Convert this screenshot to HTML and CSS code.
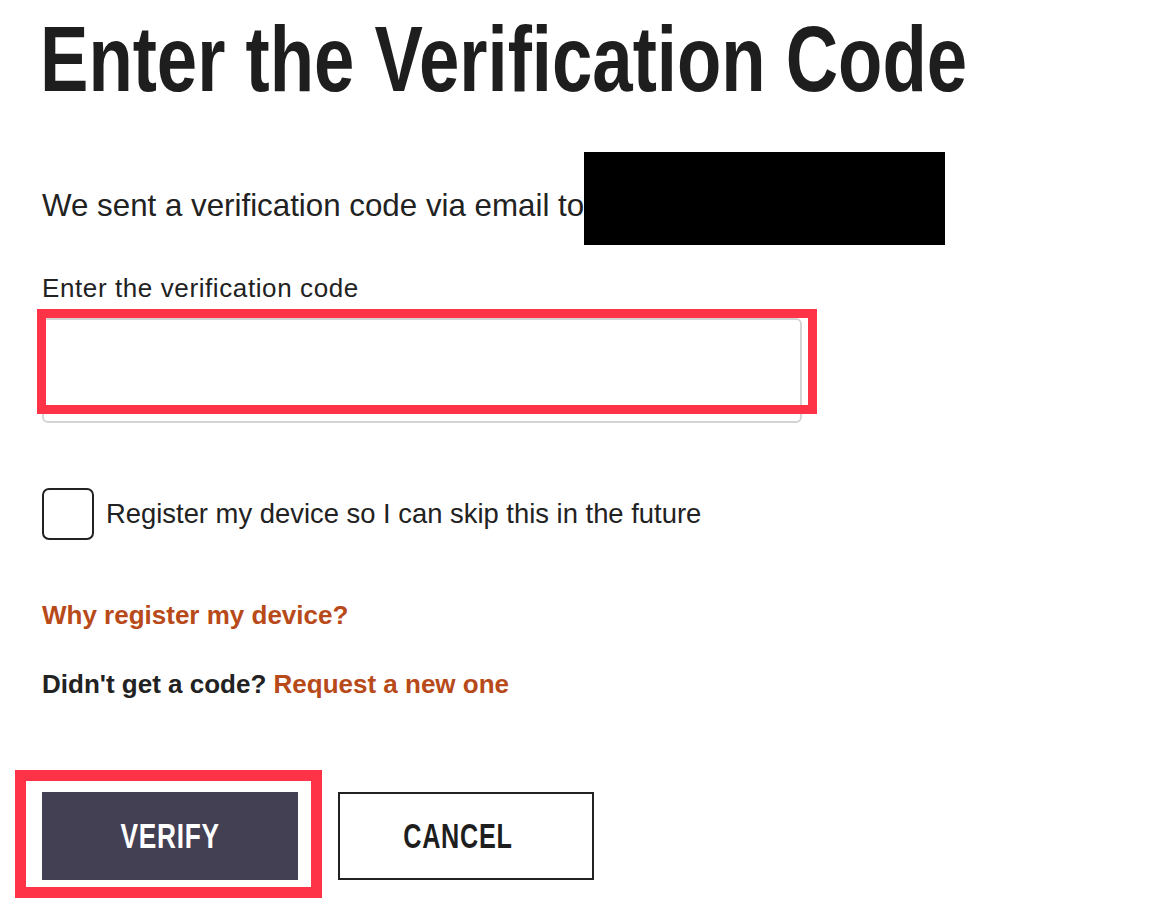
FILE: index.html
```html
<!DOCTYPE html>
<html lang="en">
<head>
    <meta charset="UTF-8">
    <meta name="viewport" content="width=device-width, initial-scale=1.0">
    <title>Enter the Verification Code</title>
    <link rel="stylesheet" href="styles.css">
</head>
<body>

<div class="container">
    <h1><span class="narrow">Enter the Verification Code</span></h1>
    <p class="sent">We sent a verification code via email to<span class="redacted"></span></p>

    <form id="verifyForm">
        <label for="code" class="label">Enter the verification code</label>
        <div class="field">
            <input type="text" id="code" name="code">
            <div class="highlight"></div>
        </div>

        <label class="remember">
            <input type="checkbox" name="remember">
            <span class="box"></span>
            <span>Register my device so I can skip this in the future</span>
        </label>

        <p class="why"><a href="#">Why register my device?</a></p>
        <p class="resend">Didn't get a code? <a href="#">Request a new one</a></p>

        <div class="actions">
            <div class="verify-wrap">
                <button type="submit" class="btn btn-verify"><span class="narrow">VERIFY</span></button>
                <div class="highlight highlight-btn"></div>
            </div>
            <button type="button" class="btn btn-cancel"><span class="narrow">CANCEL</span></button>
        </div>
    </form>
</div>

</body>
</html>
```

FILE: styles.css
```css
body {
    margin: 0;
    font-family: "Liberation Sans", Arial, sans-serif;
    color: #222;
    background-color: #fff;
}

.container {
    padding: 0 0 28px 42px;
}

.narrow {
    display: inline-block;
    white-space: nowrap;
}

h1 {
    margin: 13px 0 0 -2px;
    font-weight: bold;
    font-size: 93px;
    line-height: 1;
    color: #1e1e1e;
}

h1 .narrow {
    transform: scaleX(0.78);
    transform-origin: left center;
}

.sent {
    margin: 46px 0 0;
    font-size: 31.3px;
    line-height: 36px;
}

.redacted {
    display: inline-block;
    width: 361px;
    height: 93px;
    background-color: #000;
    vertical-align: -29px;
}

.label {
    display: block;
    margin-top: 28px;
    font-size: 26px;
    line-height: 30px;
    letter-spacing: 0.6px;
}

.field {
    position: relative;
    margin-top: 15px;
    width: 760px;
}

.field input {
    display: block;
    box-sizing: border-box;
    width: 760px;
    height: 105px;
    border: 2px solid #d4d4d4;
    border-radius: 6px;
    font-size: 28px;
    padding: 0 16px;
    outline: none;
}

.highlight {
    position: absolute;
    left: -5px;
    top: -9px;
    width: 780px;
    height: 105px;
    box-sizing: border-box;
    border: 9px solid #ff3347;
    pointer-events: none;
}

.remember {
    display: flex;
    align-items: center;
    gap: 12px;
    margin-top: 65px;
    font-size: 27.4px;
    line-height: 32px;
    cursor: pointer;
}

.remember input {
    display: none;
}

.box {
    width: 52px;
    height: 52px;
    box-sizing: border-box;
    border: 2px solid #222;
    border-radius: 7px;
    flex-shrink: 0;
}

.why {
    margin: 60px 0 0;
    font-size: 26px;
    line-height: 30px;
    font-weight: bold;
}

.resend {
    margin: 39px 0 0;
    font-size: 26px;
    line-height: 30px;
    font-weight: bold;
}

a {
    color: #b84a1a;
    text-decoration: none;
}

.actions {
    display: flex;
    gap: 40px;
    margin-top: 93px;
}

.verify-wrap {
    position: relative;
}

.btn {
    width: 256px;
    height: 88px;
    padding: 0;
    font-family: "Liberation Sans", Arial, sans-serif;
    font-weight: bold;
    font-size: 35px;
    letter-spacing: 1px;
    cursor: pointer;
}

.btn .narrow {
    transform: scaleX(0.75);
}

.btn-verify {
    display: block;
    background-color: #444054;
    color: #fff;
    border: none;
}

.btn-cancel {
    background-color: #fff;
    color: #1e1e1e;
    border: 2px solid #222;
    padding-right: 16px;
}

.btn-cancel .narrow {
    transform: scaleX(0.72);
}

.highlight-btn {
    left: -27px;
    top: -22px;
    width: 307px;
    height: 128px;
    border-width: 11px;
}
```
